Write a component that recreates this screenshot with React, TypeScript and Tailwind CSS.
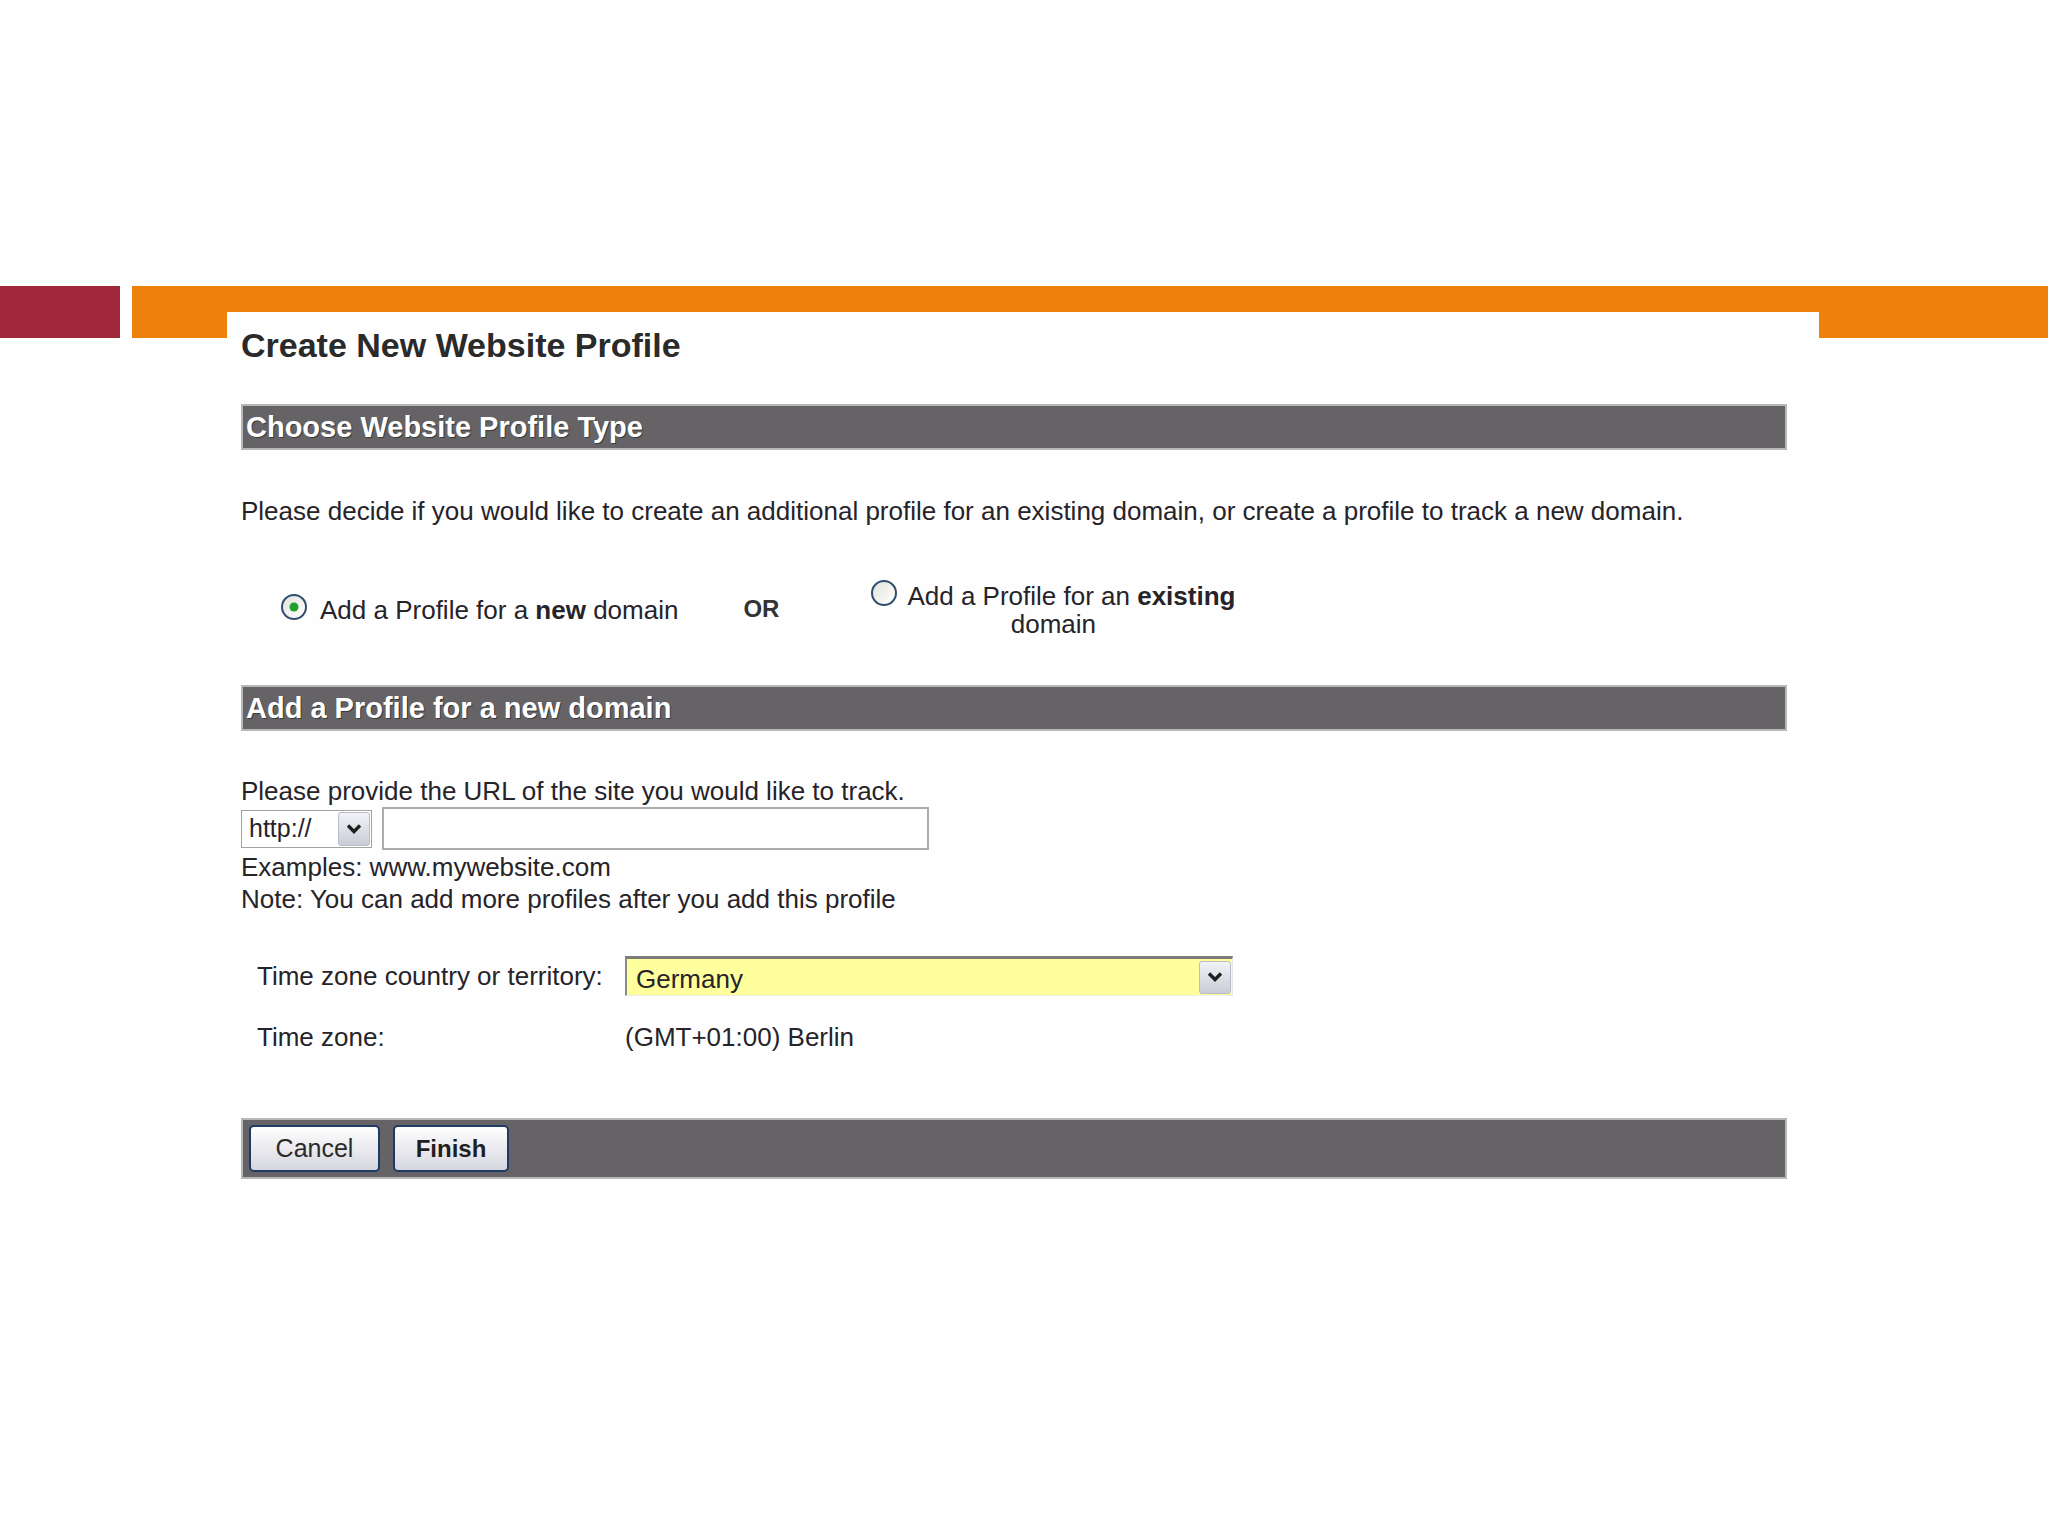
import React from "react";

const Chevron = () => (
  <svg width="16" height="12" viewBox="0 0 16 12">
    <path d="M2 2.5 L8 8.5 L14 2.5" fill="none" stroke="#1f1f1f" strokeWidth="3.4" strokeLinejoin="miter" />
  </svg>
);

const DropButton = ({ className }: { className: string }) => (
  <div
    className={
      "flex items-center justify-center rounded-[3px] border border-[#b9bdc9] bg-gradient-to-b from-[#f3f4f8] to-[#c9ccd6] " +
      className
    }
  >
    <Chevron />
  </div>
);

// plain inline-block so the baseline sits on the bottom edge, dot is laid over it
const Radio = ({ checked }: { checked?: boolean }) => (
  <span className="relative inline-block h-[26px] w-[26px] rounded-full border-2 border-[#2f4d6e] bg-gradient-to-br from-[#e2e2dc] to-[#ffffff] align-[-1px]">
    {checked && (
      <span className="absolute left-1/2 top-1/2 h-[9px] w-[9px] -translate-x-1/2 -translate-y-1/2 rounded-full bg-[#21a12b]" />
    )}
  </span>
);

const SectionBar = ({ title }: { title: string }) => (
  <div className="h-[46px] border-2 border-[#b7b7b7] bg-[#656365] pl-[3px] text-[29px] font-bold leading-[42px] text-white [text-shadow:1px_1px_0_#3a3a3a]">
    {title}
  </div>
);

export default function App() {
  return (
    <div className="h-[1536px] w-[2048px] overflow-hidden bg-[#fefefe] pt-[286px] font-['Liberation_Sans',Arial,sans-serif] text-[#262329]">
      <div className="flex">
        <div className="h-[52px] w-[120px] bg-[#a1283a]" />
        <div className="ml-[12px] flex flex-1 flex-col">
          <div className="h-[26px] bg-[#ee800c]" />
          <div className="flex items-start">
            <div className="h-[26px] w-[95px] bg-[#ee800c]" />

            <main className="flex-1 bg-[#fefefe] pl-[14px] pr-[32px]">
              <h1 className="mt-[16px] text-[34px] font-bold leading-[34px] text-[#2a2a2a]">
                Create New Website Profile
              </h1>

              <div className="mt-[42px]">
                <SectionBar title="Choose Website Profile Type" />
              </div>

              <p className="mt-[48px] text-[26px] leading-[26px]">
                Please decide if you would like to create an additional profile for an existing domain, or create a
                profile to track a new domain.
              </p>

              <div className="mt-[56px] flex items-center text-[26px] leading-[28px]">
                <div className="pl-[40px]">
                  <Radio checked />
                  <span className="ml-[13px]">
                    Add a Profile for a <b>new</b> domain
                  </span>
                </div>
                <div className="ml-[65px] text-[24px] font-bold text-[#333]">OR</div>
                <div className="ml-[84px] w-[380px] text-center">
                  <Radio />
                  <span className="ml-[10px]">
                    Add a Profile for an <b>existing</b> domain
                  </span>
                </div>
              </div>

              <div className="mt-[47px]">
                <SectionBar title="Add a Profile for a new domain" />
              </div>

              <p className="mt-[47px] text-[26px] leading-[26px]">Please provide the URL of the site you would like to track.</p>

              <div className="mt-[3px] flex h-[43px] items-center gap-[10px]">
                <div className="flex h-[38px] w-[131px] items-center justify-between border border-[#a3a3a3] bg-white pl-[7px] pr-[1px] text-[25px]">
                  <span>http://</span>
                  <DropButton className="h-[34px] w-[32px]" />
                </div>
                <input
                  className="h-[43px] w-[547px] border-2 border-[#acacac] bg-white outline-none"
                  defaultValue=""
                />
              </div>

              <div className="mt-[1px] text-[26px] leading-[32px]">
                <div>Examples: www.mywebsite.com</div>
                <div>Note: You can add more profiles after you add this profile</div>
              </div>

              <div className="mt-[41px] grid grid-cols-[368px_1fr] items-center gap-y-[28px] pl-[16px] text-[26px] leading-[26px]">
                <div>Time zone country or territory:</div>
                <div className="flex h-[40px] w-[608px] items-center justify-between border-t-[3px] border-l-2 border-r border-b border-t-[#7b7b7b] border-l-[#8a8a8a] border-r-[#e6e6e6] border-b-[#efefef] bg-[#ffff9e] pl-[9px] pr-[1px]">
                  <span className="pt-[4px]">Germany</span>
                  <DropButton className="h-[33px] w-[32px]" />
                </div>
                <div>Time zone:</div>
                <div>(GMT+01:00) Berlin</div>
              </div>

              <div className="mt-[68px] flex h-[61px] items-center gap-[13px] border-2 border-[#b7b7b7] bg-[#656365] pl-[6px]">
                <button className="h-[47px] w-[131px] rounded-[5px] border-2 border-[#1e3b66] bg-gradient-to-b from-[#ffffff] to-[#d6d6df] text-[25px] text-[#2a2a2a]">
                  Cancel
                </button>
                <button className="h-[47px] w-[116px] rounded-[5px] border-2 border-[#1e3b66] bg-gradient-to-b from-[#ffffff] to-[#d6d6df] text-[24px] font-bold text-[#1f1f1f]">
                  Finish
                </button>
              </div>
            </main>

            <div className="h-[26px] w-[229px] bg-[#ee800c]" />
          </div>
        </div>
      </div>
    </div>
  );
}
